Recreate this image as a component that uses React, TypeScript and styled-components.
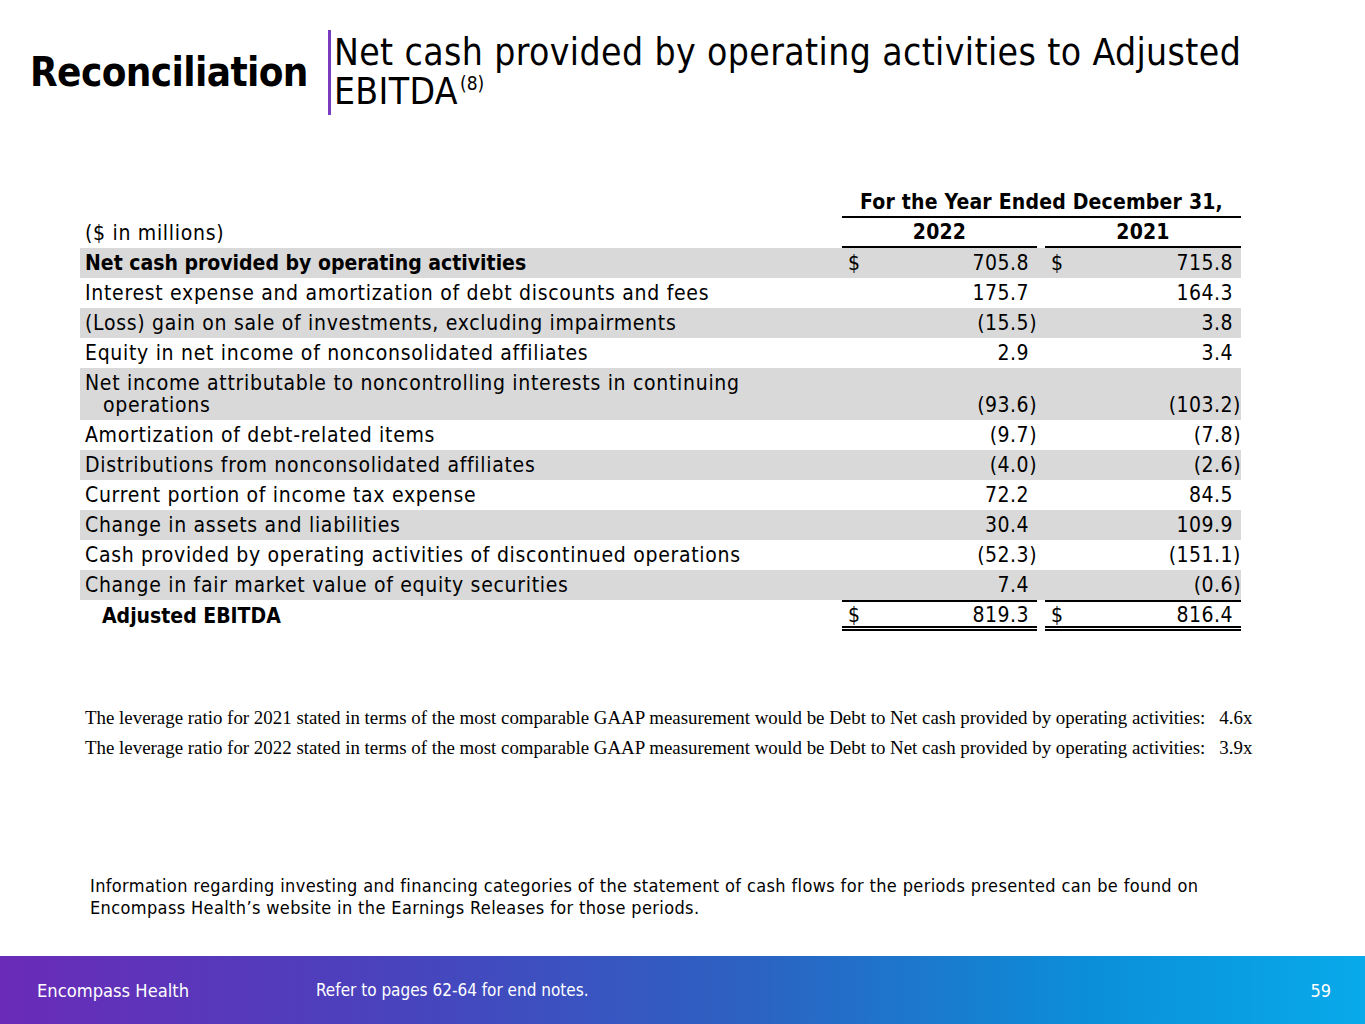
import React from "react";
import styled, { createGlobalStyle } from "styled-components";

const Global = createGlobalStyle`
  html, body { margin: 0; padding: 0; background: #fff; }
  body { font-family: "DejaVu Sans Condensed", "DejaVu Sans", sans-serif; color: #000; }
`;

const Page = styled.div`
  width: 1365px;
  height: 1024px;
  display: flex;
  flex-direction: column;
  overflow: hidden;
`;

const Header = styled.header`
  display: flex;
  align-items: flex-start;
  padding: 30px 0 0 30px;
  height: 120px;
  box-sizing: border-box;
`;

const MainTitle = styled.h1`
  margin: 22px 20px 0 0;
  font-size: 40px;
  font-weight: 700;
  line-height: 1;
  letter-spacing: -0.6px;
`;

const SubTitle = styled.h2`
  margin: 0;
  border-left: 3px solid #7a3cc0;
  padding: 3px 0 4px 3px;
  font-size: 37px;
  font-weight: 400;
  line-height: 39px;
  letter-spacing: 0.4px;
  width: 935px;
`;

const TitleLine = styled.span`
  display: block;
`;

const Sup = styled.span`
  display: inline-block;
  font-size: 19px;
  line-height: 19px;
  letter-spacing: 0;
  vertical-align: top;
  margin: 2px 0 0 2px;
`;

const TableWrap = styled.div`
  margin: 68px 0 0 80px;
  width: 1161px;
`;

const Row = styled.div<{ $shade?: boolean }>`
  display: grid;
  grid-template-columns: 762px 195px 8px 196px;
  min-height: 30px;
  background: ${(p) => (p.$shade ? "#d9d9d9" : "transparent")};
  font-size: 21px;
  line-height: 22px;
  letter-spacing: 0.7px;
  align-items: end;
`;

const Label = styled.div<{ $bold?: boolean; $indent?: number }>`
  padding: 4px 0 4px ${(p) => 5 + (p.$indent || 0)}px;
  font-weight: ${(p) => (p.$bold ? 700 : 400)};
  letter-spacing: ${(p) => (p.$bold ? "0" : "0.7px")};
`;

const Wrapped = styled.span`
  display: block;
  padding-left: 18px;
`;

const Cell = styled.div<{ $total?: boolean }>`
  display: flex;
  justify-content: space-between;
  padding: ${(p) => (p.$total ? "2px 0 0 6px" : "4px 0 4px 6px")};
  border-top: ${(p) => (p.$total ? "2px solid #000" : "none")};
  border-bottom: ${(p) => (p.$total ? "5px double #000" : "none")};
  letter-spacing: 0.5px;
`;

const Num = styled.span<{ $paren?: boolean }>`
  padding-right: ${(p) => (p.$paren ? 0 : 8)}px;
  margin-left: auto;
`;

const HeadCell = styled.div<{ $span?: boolean }>`
  grid-column: ${(p) => (p.$span ? "2 / 5" : "auto")};
  text-align: center;
  font-weight: 700;
  letter-spacing: 0.2px;
  padding: 2px 0 3px;
  border-bottom: 2px solid #000;
`;

const Gap = styled.div``;

const Notes = styled.div`
  margin: 76px 0 0 85px;
  font-family: "Liberation Serif", serif;
  font-size: 18.9px;
  display: flex;
  flex-direction: column;
  gap: 8px;
`;

const NoteLine = styled.div`
  display: flex;
  gap: 14px;
`;

const Info = styled.p`
  margin: 116px 0 0 90px;
  font-size: 18px;
  letter-spacing: 0.37px;
  line-height: 22px;
  width: 1130px;
`;

const Footer = styled.footer`
  margin-top: auto;
  height: 68px;
  background: linear-gradient(90deg, #6a2bb8 0%, #4a42bd 28%, #2c62c2 55%, #0b8fd8 80%, #08aaea 100%);
  color: #fff;
  display: flex;
  align-items: center;
  font-size: 17px;
  padding: 0 34px 0 37px;
`;

const FootBrand = styled.span`
  width: 279px;
  font-size: 18.2px;
`;

const FootNote = styled.span`
  flex: 1;
`;

const PageNum = styled.span`
  font-size: 18px;
`;

type R = { label: React.ReactNode; a: string; b: string; dollar?: boolean; bold?: boolean };

const rows: R[] = [
  { label: "Net cash provided by operating activities", a: "705.8", b: "715.8", dollar: true, bold: true },
  { label: "Interest expense and amortization of debt discounts and fees", a: "175.7", b: "164.3" },
  { label: "(Loss) gain on sale of investments, excluding impairments", a: "(15.5)", b: "3.8" },
  { label: "Equity in net income of nonconsolidated affiliates", a: "2.9", b: "3.4" },
  {
    label: (
      <>
        Net income attributable to noncontrolling interests in continuing
        <Wrapped>operations</Wrapped>
      </>
    ),
    a: "(93.6)",
    b: "(103.2)",
  },
  { label: "Amortization of debt-related items", a: "(9.7)", b: "(7.8)" },
  { label: "Distributions from nonconsolidated affiliates", a: "(4.0)", b: "(2.6)" },
  { label: "Current portion of income tax expense", a: "72.2", b: "84.5" },
  { label: "Change in assets and liabilities", a: "30.4", b: "109.9" },
  { label: "Cash provided by operating activities of discontinued operations", a: "(52.3)", b: "(151.1)" },
  { label: "Change in fair market value of equity securities", a: "7.4", b: "(0.6)" },
];

const isParen = (s: string) => s.startsWith("(");

export default function App() {
  return (
    <Page>
      <Global />
      <Header>
        <MainTitle>Reconciliation</MainTitle>
        <SubTitle>
          <TitleLine>Net cash provided by operating activities to Adjusted</TitleLine>
          <TitleLine>
            EBITDA<Sup>(8)</Sup>
          </TitleLine>
        </SubTitle>
      </Header>
      <TableWrap>
        <Row>
          <Gap />
          <HeadCell $span>For the Year Ended December 31,</HeadCell>
        </Row>
        <Row>
          <Label>($ in millions)</Label>
          <HeadCell>2022</HeadCell>
          <Gap />
          <HeadCell>2021</HeadCell>
        </Row>
        {rows.map((r, i) => (
          <Row key={i} $shade={i % 2 === 0}>
            <Label $bold={r.bold}>{r.label}</Label>
            <Cell>
              {r.dollar && <span>$</span>}
              <Num $paren={isParen(r.a)}>{r.a}</Num>
            </Cell>
            <Gap />
            <Cell>
              {r.dollar && <span>$</span>}
              <Num $paren={isParen(r.b)}>{r.b}</Num>
            </Cell>
          </Row>
        ))}
        <Row>
          <Label $bold $indent={17}>Adjusted EBITDA</Label>
          <Cell $total>
            <span>$</span>
            <Num>819.3</Num>
          </Cell>
          <Gap />
          <Cell $total>
            <span>$</span>
            <Num>816.4</Num>
          </Cell>
        </Row>
      </TableWrap>
      <Notes>
        <NoteLine>
          <span>The leverage ratio for 2021 stated in terms of the most comparable GAAP measurement would be Debt to Net cash provided by operating activities:</span>
          <span>4.6x</span>
        </NoteLine>
        <NoteLine>
          <span>The leverage ratio for 2022 stated in terms of the most comparable GAAP measurement would be Debt to Net cash provided by operating activities:</span>
          <span>3.9x</span>
        </NoteLine>
      </Notes>
      <Info>
        Information regarding investing and financing categories of the statement of cash flows for the periods presented can be found on
        Encompass Health’s website in the Earnings Releases for those periods.
      </Info>
      <Footer>
        <FootBrand>Encompass Health</FootBrand>
        <FootNote>Refer to pages 62-64 for end notes.</FootNote>
        <PageNum>59</PageNum>
      </Footer>
    </Page>
  );
}
